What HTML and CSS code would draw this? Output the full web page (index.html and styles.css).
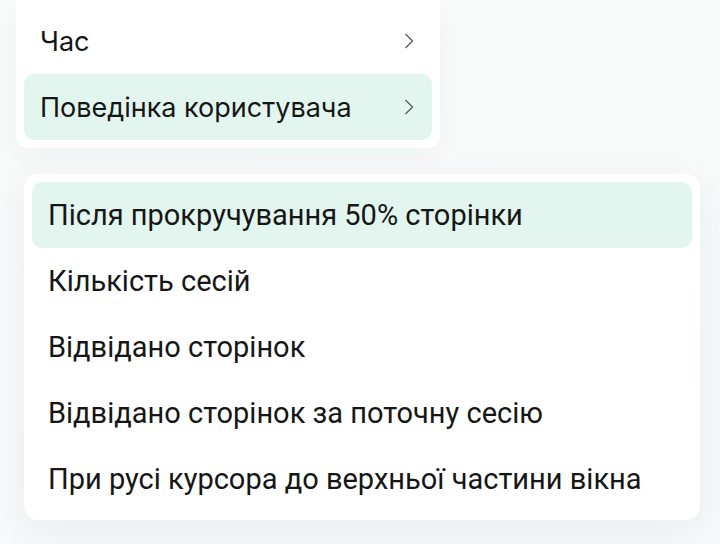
FILE: index.html
```html
<!DOCTYPE html>
<html lang="uk">
<head>
<meta charset="utf-8">
<link rel="stylesheet" href="styles.css">
</head>
<body>
<div class="menu">
  <div class="menu-row">
    <span>Час</span>
    <svg class="chev" width="10" height="18" viewBox="0 0 10 18"><path d="M1.5 2 L8.5 9 L1.5 16" fill="none" stroke="#5a5a5a" stroke-width="1.3"/></svg>
  </div>
  <div class="menu-row active">
    <span>Поведінка користувача</span>
    <svg class="chev" width="10" height="18" viewBox="0 0 10 18"><path d="M1.5 2 L8.5 9 L1.5 16" fill="none" stroke="#5a5a5a" stroke-width="1.3"/></svg>
  </div>
</div>
<div class="dropdown">
  <div class="item active">Після прокручування 50% сторінки</div>
  <div class="item">Кількість сесій</div>
  <div class="item">Відвідано сторінок</div>
  <div class="item">Відвідано сторінок за поточну сесію</div>
  <div class="item">При русі курсора до верхньої частини вікна</div>
</div>
</body>
</html>
```
FILE: styles.css
```css
html, body {
  margin: 0;
  padding: 0;
}
body {
  width: 720px;
  height: 544px;
  overflow: hidden;
  background: linear-gradient(180deg, #f8fbfa 0%, #f7f9fa 100%);
  font-family: Inter, "Noto Sans", sans-serif;
  color: #161616;
}
.menu {
  margin-left: 16px;
  width: 408px;
  padding: 8px;
  background: #ffffff;
  border-radius: 0 0 12px 12px;
  box-shadow: 0 8px 24px rgba(30, 40, 60, 0.04);
}
.menu-row {
  height: 66px;
  display: flex;
  align-items: center;
  justify-content: space-between;
  padding: 0 18px 0 16px;
  border-radius: 10px;
  font-size: 27px;
}
.menu-row.active {
  background: #e2f6ef;
}
.chev {
  display: block;
}
.dropdown {
  margin: 26px 0 0 24px;
  width: 660px;
  padding: 8px;
  background: #ffffff;
  border-radius: 14px;
  box-shadow: 0 10px 40px rgba(30, 40, 60, 0.06);
}
.item {
  height: 66px;
  display: flex;
  align-items: center;
  padding: 0 16px;
  border-radius: 10px;
  font-family: Roboto, "Noto Sans", sans-serif;
  font-size: 29px;
}
.item.active {
  background: #e2f6ef;
}
```
